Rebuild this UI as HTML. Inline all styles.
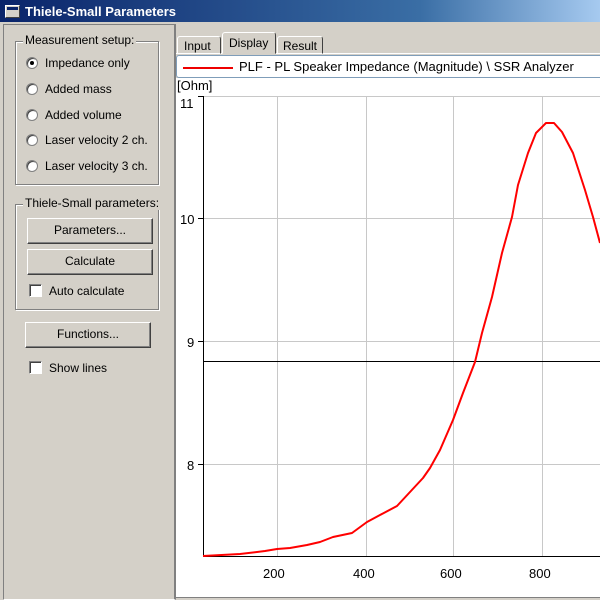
<!DOCTYPE html>
<html><head><style>
*{margin:0;padding:0;box-sizing:border-box}
body{width:600px;height:600px;overflow:hidden;background:#d4d0c8;font-family:"Liberation Sans",sans-serif;font-size:12px;color:#000;position:relative}
.a{position:absolute}
.title{left:0;top:0;width:600px;height:24px;background:linear-gradient(90deg,#0a246a,#3a6ea5 70%,#a6caf0);border-bottom:2px solid #d4d0c8}
.title span{position:absolute;left:25px;top:4px;color:#fff;font-weight:bold;font-size:13px}
.ico{left:5px;top:5px;width:15px;height:13px;background:#d4d0c8;border:1px solid #fff;border-right-color:#404040;border-bottom-color:#404040}
.ico:after{content:"";position:absolute;left:1px;top:1px;right:1px;height:3px;background:#0a246a}
.grp{border:1px solid #808080;box-shadow:1px 1px 0 #fff, inset 1px 1px 0 #fff}
.lg{background:#d4d0c8;padding:0 2px;white-space:nowrap}
.rad{width:12px;height:12px;border-radius:50%;background:#fff;border:1px solid #808080;box-shadow:inset 1px 1px 0 #404040}
.dot{position:absolute;left:3px;top:3px;width:4px;height:4px;border-radius:50%;background:#000}
.btn{background:#d4d0c8;border:1px solid;border-color:#fff #404040 #404040 #fff;box-shadow:inset -1px -1px 0 #808080;text-align:center;line-height:23px}
.chk{width:13px;height:13px;background:#fff;border:1px solid;border-color:#808080 #fff #fff #808080;box-shadow:inset 1px 1px 0 #404040}
</style></head><body>
<div class="a title"><div class="a ico"></div><span>Thiele-Small Parameters</span></div>
<div class="a" style="left:3px;top:24px;width:173px;height:576px;border:1px solid;border-color:#808080 #808080 #fff #808080;border-right:2px solid #808080"></div>

<div class="a grp" style="left:15px;top:41px;width:144px;height:144px"></div>
<div class="a lg" style="left:23px;top:33px">Measurement setup:</div>
<div class="a rad" style="left:26px;top:57px"><div class="dot"></div></div><div class="a" style="left:45px;top:56px">Impedance only</div>
<div class="a rad" style="left:26px;top:83px"></div><div class="a" style="left:45px;top:82px">Added mass</div>
<div class="a rad" style="left:26px;top:109px"></div><div class="a" style="left:45px;top:108px">Added volume</div>
<div class="a rad" style="left:26px;top:134px"></div><div class="a" style="left:45px;top:133px">Laser velocity 2 ch.</div>
<div class="a rad" style="left:26px;top:160px"></div><div class="a" style="left:45px;top:159px">Laser velocity 3 ch.</div>

<div class="a grp" style="left:15px;top:204px;width:144px;height:106px"></div>
<div class="a lg" style="left:23px;top:196px">Thiele-Small parameters:</div>
<div class="a btn" style="left:27px;top:218px;width:126px;height:26px">Parameters...</div>
<div class="a btn" style="left:27px;top:249px;width:126px;height:26px">Calculate</div>
<div class="a chk" style="left:29px;top:284px"></div><div class="a" style="left:49px;top:284px">Auto calculate</div>
<div class="a btn" style="left:25px;top:322px;width:126px;height:26px">Functions...</div>
<div class="a chk" style="left:29px;top:361px"></div><div class="a" style="left:49px;top:361px">Show lines</div>

<div class="a" style="left:176px;top:53px;width:424px;height:2px;border-top:1px solid #fff"></div>
<div class="a" style="left:177px;top:36px;width:44px;height:18px;border:1px solid;border-color:#fff #404040 transparent #fff;border-radius:3px 3px 0 0;padding:2px 0 0 6px">Input</div>
<div class="a" style="left:222px;top:32px;width:54px;height:22px;border:1px solid;border-color:#fff #404040 transparent #fff;border-radius:3px 3px 0 0;padding:3px 0 0 6px;background:#d4d0c8">Display</div>
<div class="a" style="left:277px;top:36px;width:46px;height:18px;border:1px solid;border-color:#fff #404040 transparent #fff;border-radius:3px 3px 0 0;padding:2px 0 0 5px">Result</div>

<div class="a" style="left:176px;top:78px;width:424px;height:519px;background:#fff"></div>
<div class="a" style="left:176px;top:55px;width:430px;height:23px;background:#fff;border:1px solid #7f9db9;border-radius:3px;white-space:nowrap;font-size:13px;padding:3px 0 0 4px"><span style="display:inline-block;width:50px;height:2px;background:#e00;vertical-align:middle;margin:0 6px 0 2px"></span>PLF - PL Speaker Impedance (Magnitude) \ SSR Analyzer</div>
<div class="a" style="left:177px;top:78px;font-size:13px">[Ohm]</div>

<svg class="a" style="left:0;top:0" width="600" height="600">
<g stroke="#c8c8c8" stroke-width="1">
<line x1="277.5" y1="96" x2="277.5" y2="556"/><line x1="366.5" y1="96" x2="366.5" y2="556"/><line x1="453.5" y1="96" x2="453.5" y2="556"/><line x1="542.5" y1="96" x2="542.5" y2="556"/>
<line x1="203" y1="218.5" x2="600" y2="218.5"/><line x1="203" y1="341.5" x2="600" y2="341.5"/><line x1="203" y1="464.5" x2="600" y2="464.5"/><line x1="203" y1="96.5" x2="600" y2="96.5"/>
</g>
<g stroke="#000" stroke-width="1">
<line x1="203.5" y1="96" x2="203.5" y2="557"/><line x1="203" y1="556.5" x2="600" y2="556.5"/>
<line x1="198" y1="96.5" x2="203" y2="96.5"/><line x1="198" y1="218.5" x2="203" y2="218.5"/><line x1="198" y1="341.5" x2="203" y2="341.5"/><line x1="198" y1="464.5" x2="203" y2="464.5"/>
<line x1="203" y1="361.5" x2="600" y2="361.5"/>
</g>
<polyline fill="none" stroke="#f00" stroke-width="2" stroke-linejoin="round" points="203,556 240,554 265,551 277,549 290,548 307,545 320,542 333,537 352,533 367,522 380,515 397,506 410,492 423,478 430,468 440,450 453,420 463,393 475,362 482,333 492,297 502,253 512,217 518,185 528,153 536,133 546,123 554,123 562,132 573,153 585,190 593,217 600,243"/>
<g font-family="Liberation Sans,sans-serif" font-size="13" fill="#000">
<text x="180" y="108">11</text><text x="180" y="224">10</text><text x="187" y="347">9</text><text x="187" y="470">8</text>
<text x="263" y="578">200</text><text x="353" y="578">400</text><text x="440" y="578">600</text><text x="529" y="578">800</text>
</g>
</svg>
<div class="a" style="left:176px;top:597px;width:424px;height:3px;background:#d4d0c8;border-top:1px solid #808080"></div>
</body></html>
